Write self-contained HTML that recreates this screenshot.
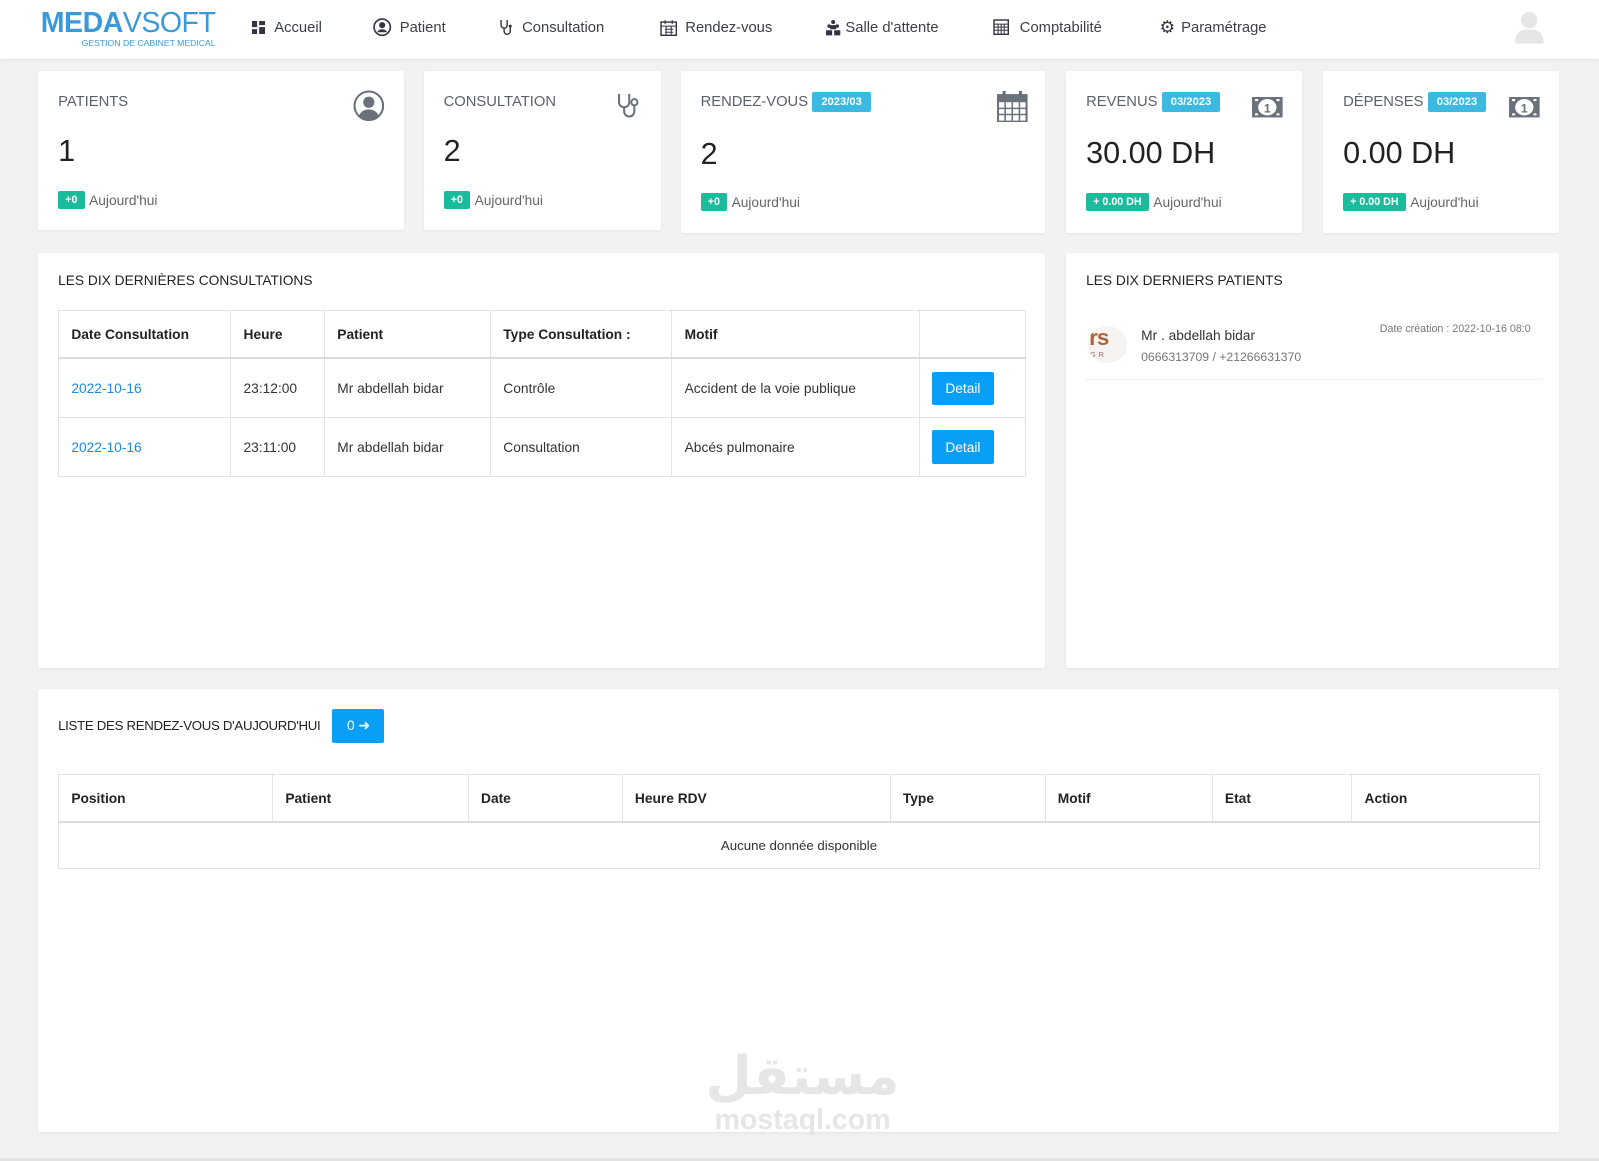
<!DOCTYPE html>
<html><head><meta charset="utf-8"><style>
*{box-sizing:border-box;margin:0;padding:0}
html,body{width:1599px;height:1161px;overflow:hidden;background:#f2f2f2}
#w{zoom:1.0198;width:1568px;height:1139px;position:relative;font-family:"Liberation Sans",sans-serif;color:#333}
.a{position:absolute}
.nav{left:0;top:0;width:1568px;height:58px;background:#fff;box-shadow:0 1px 4px rgba(0,0,0,.08)}
.ni{position:absolute;top:0;height:54px;display:flex;align-items:center;font-size:14.5px;color:#3a3f48;white-space:nowrap}
.ni svg,.ni span{flex:none}
.card{position:absolute;background:#fff;box-shadow:0 1px 3px rgba(0,0,0,.05);border-radius:2px}
.t{position:absolute;font-size:14.5px;color:#5b626b;white-space:nowrap}
.num{position:absolute;font-size:30px;color:#222}
.badge{display:inline-block;background:#1abc9c;color:#fff;font-size:10.5px;font-weight:bold;padding:3px 7px;border-radius:2px;vertical-align:middle}
.bl{display:inline-block;background:#3bb9e0;color:#fff;font-size:11px;font-weight:bold;padding:4px 9px;border-radius:2px;vertical-align:middle;margin-left:4px}
.auj{font-size:13.5px;color:#666;vertical-align:middle}
.h{position:absolute;font-size:13.5px;color:#222;white-space:nowrap}
table{position:absolute;border-collapse:collapse;font-size:13.5px}
td,th{border:1px solid #e3e3e3;text-align:left;padding:0 12px;font-weight:normal;color:#333}
th{font-weight:bold;color:#222}
thead tr th{border-bottom:2px solid #dcdcdc}
.btn{background:#0a9ff6;color:#fff;font-size:13.5px;padding:9px 13px;border-radius:2px;display:inline-block}
</style></head><body><div id="w">
<div class="a nav">
 <div class="a" style="left:40px;top:8px;color:#3a9ad9;font-size:28px;font-weight:bold;letter-spacing:-0.5px;line-height:30px">MEDA<span style="font-weight:normal">V</span><span style="font-weight:normal">SOFT</span></div>
 <div class="a" style="left:80px;top:37px;color:#3a9ad9;font-size:8.5px">GESTION DE CABINET MEDICAL</div>
 <div class="ni" style="left:247px"><svg width="13" height="13" style="margin-right:9px"><rect x="0" y="0" width="5" height="6" fill="#334"/><rect x="7" y="0" width="6" height="4" fill="#334"/><rect x="0" y="8" width="5" height="5" fill="#334"/><rect x="7" y="6" width="6" height="7" fill="#334"/></svg>Accueil</div>
 <div class="ni" style="left:366px"><svg width="18" height="18" style="margin-right:8px"><circle cx="9" cy="9" r="8" fill="none" stroke="#334" stroke-width="1.6"/><circle cx="9" cy="7" r="3" fill="#334"/><path d="M4 14c2-4 8-4 10 0" fill="#334"/></svg>Patient</div>
 <div class="ni" style="left:488px"><svg width="16" height="16" style="margin-right:8px"><path d="M3 1v5a3 3 0 006 0V1M6 9v3a3 3 0 006 0V8" fill="none" stroke="#334" stroke-width="1.4"/><circle cx="12" cy="7" r="1.5" fill="#334"/></svg>Consultation</div>
 <div class="ni" style="left:647px"><svg width="17" height="17" style="margin-right:8px"><rect x="1" y="3" width="15" height="13" fill="none" stroke="#334" stroke-width="1.4"/><path d="M1 7h15M5 10h8M5 13h8M6 7v9M11 7v9M5 1v4M12 1v4" stroke="#334" stroke-width="1"/></svg>Rendez-vous</div>
 <div class="ni" style="left:809px"><svg width="16" height="16" style="margin-right:4px"><circle cx="8" cy="3" r="2" fill="#334"/><circle cx="4" cy="7" r="1.7" fill="#334"/><circle cx="12" cy="7" r="1.7" fill="#334"/><path d="M1 16v-5h6v5zM9 16v-5h6v5zM5 10h6v-4h-6z" fill="#334"/></svg>Salle d'attente</div>
 <div class="ni" style="left:974px"><svg width="16" height="16" style="margin-right:10px"><rect x="1" y="1" width="14" height="14" fill="none" stroke="#334" stroke-width="1.4"/><path d="M1 5h14M1 8h14M1 11h14M5 5v10M8 5v10M11 5v10" stroke="#334" stroke-width="1"/></svg>Comptabilité</div>
 <div class="ni" style="left:1137px"><span style="font-size:17px;color:#334;margin-right:6px">&#9881;</span>Paramétrage</div>
 <svg class="a" style="left:1486px;top:11px" width="28" height="32"><circle cx="14" cy="9" r="8" fill="#e6e6e6"/><path d="M0 32c0-12 6-14 14-14s14 2 14 14z" fill="#e6e6e6"/></svg>
</div>

<div class="card" style="left:37px;top:70px;width:359px;height:156px">
 <div class="t" style="left:20px;top:22px">PATIENTS</div>
 <svg class="a" style="left:309px;top:18px" width="31" height="31"><circle cx="15.5" cy="15.5" r="14" fill="none" stroke="#6b717a" stroke-width="2"/><circle cx="15.5" cy="12" r="5.5" fill="#6b717a"/><path d="M6 25c3-8 16-8 19 0a13 13 0 01-19 0z" fill="#6b717a"/></svg>
 <div class="num" style="left:20px;top:61px">1</div>
 <div class="a" style="left:20px;top:117px"><span class="badge">+0</span> <span class="auj">Aujourd'hui</span></div>
</div>
<div class="card" style="left:416px;top:70px;width:232px;height:156px">
 <div class="t" style="left:19px;top:22px">CONSULTATION</div>
 <svg class="a" style="left:188px;top:20px" width="26" height="28"><path d="M3 2v8a5 5 0 0010 0V2M8 15v4a5 5 0 0010 0v-6" fill="none" stroke="#6b717a" stroke-width="2"/><circle cx="18" cy="10" r="3" fill="none" stroke="#6b717a" stroke-width="2"/></svg>
 <div class="num" style="left:19px;top:61px">2</div>
 <div class="a" style="left:19px;top:117px"><span class="badge">+0</span> <span class="auj">Aujourd'hui</span></div>
</div>
<div class="card" style="left:668px;top:70px;width:357px;height:158px">
 <div class="t" style="left:19px;top:20px">RENDEZ-VOUS<span class="bl">2023/03</span></div>
 <svg class="a" style="left:310px;top:18px" width="30" height="32"><rect x="1" y="5" width="28" height="26" fill="none" stroke="#6b717a" stroke-width="2"/><rect x="1" y="5" width="28" height="7" fill="#6b717a"/><path d="M1 18h28M1 24h28M8 12v19M15 12v19M22 12v19" stroke="#6b717a" stroke-width="1.5"/><path d="M7 1v7M23 1v7" stroke="#6b717a" stroke-width="3"/></svg>
 <div class="num" style="left:19px;top:64px">2</div>
 <div class="a" style="left:19px;top:119px"><span class="badge">+0</span> <span class="auj">Aujourd'hui</span></div>
</div>
<div class="card" style="left:1045px;top:70px;width:232px;height:158px">
 <div class="t" style="left:20px;top:20px">REVENUS<span class="bl">03/2023</span></div>
 <svg class="a" style="left:182px;top:24px" width="32" height="22"><rect x="1" y="1" width="30" height="20" fill="#6b717a"/><ellipse cx="16" cy="11" rx="9" ry="8" fill="#fff"/><path d="M4 4h3M25 4h3M4 18h3M25 18h3" stroke="#fff" stroke-width="2"/><text x="16" y="16" font-size="12" font-weight="bold" text-anchor="middle" fill="#6b717a" font-family="Liberation Sans">1</text></svg>
 <div class="num" style="left:20px;top:63px">30.00 DH</div>
 <div class="a" style="left:20px;top:119px"><span class="badge">+ 0.00 DH</span> <span class="auj">Aujourd'hui</span></div>
</div>
<div class="card" style="left:1297px;top:70px;width:232px;height:158px">
 <div class="t" style="left:20px;top:20px">DÉPENSES<span class="bl">03/2023</span></div>
 <svg class="a" style="left:182px;top:24px" width="32" height="22"><rect x="1" y="1" width="30" height="20" fill="#6b717a"/><ellipse cx="16" cy="11" rx="9" ry="8" fill="#fff"/><path d="M4 4h3M25 4h3M4 18h3M25 18h3" stroke="#fff" stroke-width="2"/><text x="16" y="16" font-size="12" font-weight="bold" text-anchor="middle" fill="#6b717a" font-family="Liberation Sans">1</text></svg>
 <div class="num" style="left:20px;top:63px">0.00 DH</div>
 <div class="a" style="left:20px;top:119px"><span class="badge">+ 0.00 DH</span> <span class="auj">Aujourd'hui</span></div>
</div>

<div class="card" style="left:37px;top:248px;width:988px;height:407px">
 <div class="h" style="left:20px;top:20px">LES DIX DERNIÈRES CONSULTATIONS</div>
 <table style="left:20px;top:56px;width:949px">
  <colgroup><col style="width:169px"><col style="width:92px"><col style="width:163px"><col style="width:178px"><col style="width:243px"><col style="width:104px"></colgroup>
  <thead><tr style="height:47px"><th>Date Consultation</th><th>Heure</th><th>Patient</th><th>Type Consultation :</th><th>Motif</th><th></th></tr></thead>
  <tbody>
  <tr style="height:58px"><td style="color:#1e88e5">2022-10-16</td><td>23:12:00</td><td>Mr abdellah bidar</td><td>Contrôle</td><td>Accident de la voie publique</td><td><span class="btn">Detail</span></td></tr>
  <tr style="height:58px"><td style="color:#1e88e5">2022-10-16</td><td>23:11:00</td><td>Mr abdellah bidar</td><td>Consultation</td><td>Abcés pulmonaire</td><td><span class="btn">Detail</span></td></tr>
  </tbody>
 </table>
</div>
<div class="card" style="left:1045px;top:248px;width:484px;height:407px">
 <div class="h" style="left:20px;top:20px">LES DIX DERNIERS PATIENTS</div>
 <div class="a" style="left:22px;top:72px;width:38px;height:36px;border-radius:50%;background:#f7f3f1;overflow:hidden">
  <div class="a" style="left:1px;top:1px;font-size:22px;font-weight:bold;color:#b0643a;letter-spacing:-1px;line-height:22px">rs</div>
  <div class="a" style="left:2px;top:24px;font-size:7px;color:#8a6a5a;letter-spacing:3px">GR</div>
 </div>
 <div class="a" style="left:74px;top:74px;font-size:13.5px;color:#333">Mr . abdellah bidar</div>
 <div class="a" style="left:74px;top:95px;font-size:12px;color:#777">0666313709 / +21266631370</div>
 <div class="a" style="left:308px;top:69px;font-size:10.5px;color:#777;white-space:nowrap">Date création : 2022-10-16 08:0</div>
 <div class="a" style="left:20px;top:124px;width:446px;height:1px;background:#f0f0f0"></div>
</div>

<div class="card" style="left:37px;top:676px;width:1492px;height:434px">
 <div class="h" style="left:20px;top:28px;font-size:13px;letter-spacing:-0.3px">LISTE DES RENDEZ-VOUS D'AUJOURD'HUI</div>
 <div class="a" style="left:289px;top:19px;width:51px;height:34px;background:#0a9ff6;color:#fff;font-size:13.5px;line-height:34px;text-align:center;border-radius:2px">0 &#10140;</div>
 <table style="left:20px;top:83px;width:1453px">
  <colgroup><col style="width:210px"><col style="width:192px"><col style="width:151px"><col style="width:263px"><col style="width:152px"><col style="width:164px"><col style="width:137px"><col style="width:184px"></colgroup>
  <thead><tr style="height:47px"><th>Position</th><th>Patient</th><th>Date</th><th>Heure RDV</th><th>Type</th><th>Motif</th><th>Etat</th><th>Action</th></tr></thead>
  <tbody><tr style="height:45px"><td colspan="8" style="text-align:center;font-size:13px">Aucune donnée disponible</td></tr></tbody>
 </table>
 <div class="a" style="left:640px;top:352px;width:220px;text-align:center;font-family:'DejaVu Sans',sans-serif;font-size:52px;font-weight:bold;color:#e6e6e6;line-height:56px">مستقل</div>
 <div class="a" style="left:640px;top:408px;width:220px;text-align:center;font-size:28px;font-weight:bold;color:#e6e6e6;line-height:30px">mostaql.com</div>
</div>
<div class="a" style="left:0;top:1136px;width:1568px;height:2px;background:#e2e2e2"></div>
</div></body></html>
